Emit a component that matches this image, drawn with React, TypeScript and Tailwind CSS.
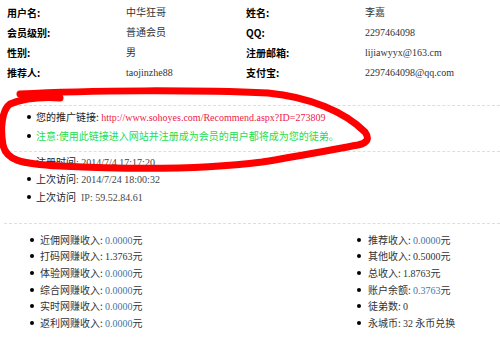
import React from 'react';

const serif = "font-['Liberation_Serif','Noto_Sans_CJK_SC',serif]";
const sans = "font-['Noto_Sans_CJK_SC','Liberation_Sans',sans-serif]";

const info = [
  ['用户名:', '中华狂哥', '姓名:', '李嘉'],
  ['会员级别:', '普通会员', 'QQ:', '2297464098'],
  ['性别:', '男', '注册邮箱:', 'lijiawyyx@163.cm'],
  ['推荐人:', 'taojinzhe88', '支付宝:', '2297464098@qq.com'],
];

const leftIncome = [
  ['近佣网赚收入', '0.0000', true],
  ['打码网赚收入', '1.3763', false],
  ['体验网赚收入', '0.0000', true],
  ['综合网赚收入', '0.0000', true],
  ['实时网赚收入', '0.0000', true],
  ['返利网赚收入', '0.0000', true],
] as const;

function Dot() {
  return <span className="inline-block w-[4px] h-[4px] rounded-full bg-black shrink-0" />;
}

export default function App() {
  return (
    <div className="relative w-[500px] h-[339px] overflow-hidden bg-white text-[10px] text-[#333]">
      <div className="pt-[2px]">
        {info.map((r) => (
          <div key={r[0]} className="flex h-[20px] items-center">
            <div className={`w-[126px] pl-[7px] font-bold text-black ${sans}`}>{r[0]}</div>
            <div className={`w-[120px] ${serif}`}>{r[1]}</div>
            <div className={`w-[119px] font-bold text-black ${sans}`}>{r[2]}</div>
            <div className={serif}>{r[3]}</div>
          </div>
        ))}
      </div>

      <div className="mt-[23px] ml-[4px] border-t border-dashed border-[#dedede] pt-[1px] pb-[6px]">
        <div className="flex items-center h-[19px] pl-[23px] gap-[5px]">
          <Dot />
          <span className={serif}>
            <span className={`text-[#222] ${sans}`}>您的推广链接:</span>{' '}
            <span className="text-[#f0204a]">http://www.sohoyes.com/Recommend.aspx?ID=273809</span>
          </span>
        </div>
        <div className="flex items-center h-[19px] pl-[23px] gap-[5px]">
          <Dot />
          <span className={`text-[#22dd55] ${sans}`}>注意:使用此链接进入网站并注册成为会员的用户都将成为您的徒弟。</span>
        </div>
      </div>

      <div className="ml-[4px] border-t border-dashed border-[#dedede] pt-[1px] pb-[17px]">
        {[
          ['注册时间', '2014/7/4 17:17:20'],
          ['上次访问', '2014/7/24 18:00:32'],
          ['上次访问 IP', '59.52.84.61'],
        ].map(([k, v]) => (
          <div key={k} className="flex items-center h-[17.5px] pl-[23px] gap-[5px]">
            <Dot />
            <span>
              <span className={`text-[#222] ${sans}`}>{k.replace(' IP', '')}</span>
              {k.includes('IP') && <span className={`${serif} text-[#555]`}>&nbsp; IP</span>}
              <span className={`${serif} text-[#444]`}>: {v}</span>
            </span>
          </div>
        ))}
      </div>

      <div className="ml-[4px] border-t border-dashed border-[#dedede] pt-[8px] flex">
        <div className="w-[349px] pl-[26px]">
          {leftIncome.map(([k, v, blue]) => (
            <div key={k} className="flex items-center h-[16.6px] gap-[6px]">
              <Dot />
              <span className={sans}>
                {k}: <span className={`${serif} ${blue ? 'text-[#3d78a8]' : 'text-[#333]'}`}>{v}</span>元
              </span>
            </div>
          ))}
        </div>
        <div className="pl-[4px]">
          {[
            ['推荐收入', '0.0000', true],
            ['其他收入', '0.5000', false],
            ['总收入', '1.8763', false],
            ['账户余额', '0.3763', true],
          ].map(([k, v, blue]) => (
            <div key={k as string} className="flex items-center h-[16.6px] gap-[7px]">
              <Dot />
              <span className={sans}>
                {k}: <span className={`${serif} ${blue ? 'text-[#3d78a8]' : 'text-[#333]'}`}>{v}</span>元
              </span>
            </div>
          ))}
          <div className="flex items-center h-[16.6px] gap-[7px]">
            <Dot />
            <span className={sans}>徒弟数: <span className={serif}>0</span></span>
          </div>
          <div className="flex items-center h-[16.6px] gap-[7px]">
            <Dot />
            <span className={sans}>永城币: <span className={serif}>32</span> 永币兑换</span>
          </div>
        </div>
      </div>

      <svg className="absolute left-0 top-0 pointer-events-none" width="500" height="339" viewBox="0 0 500 339">
        <path
          d="M20 94 C90 90 200 90 268 93 C310 97 345 112 365 132 C370 139 367 143 358 145 C330 150 300 156 262 162 C200 170 120 169 60 166 C20 164 6 160 3 145 C0 128 2 110 10 104 C25 98 45 97 60 98"
          fill="none"
          stroke="#ff0000"
          strokeWidth="7"
          strokeLinecap="round"
          strokeLinejoin="round"
        />
      </svg>
    </div>
  );
}
